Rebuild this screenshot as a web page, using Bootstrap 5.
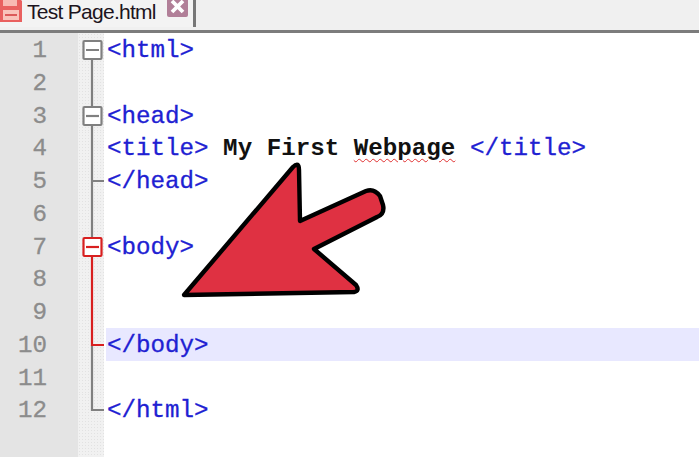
<!DOCTYPE html>
<html lang="en">
<head>
<meta charset="utf-8">
<title>Test Page.html</title>
<link href="https://cdn.jsdelivr.net/npm/bootstrap@5.3.0/dist/css/bootstrap.min.css" rel="stylesheet">
<style>
html, body { height: 100%; overflow: hidden; background: #fff; }
.editor-shell { position: relative; width: 699px; height: 457px; overflow: hidden; }
.tabstrip { height: 33px; background: #f0f0f0; border-bottom: 3px solid #7c7c7c; }
.file-tab { width: 196px; height: 27px; background: #f3f3f3; border-right: 3px solid #777; font: 21px/24px "Liberation Sans", sans-serif; color: #1c1420; letter-spacing: -.72px; }
.file-tab svg { flex: none; }
.tab-name { margin-left: 5px; }
.tab-close { margin-left: 11px; flex: none; margin-top: -4px; }
.tab-disk { margin-top: -2px; }
.editor-body { height: 424px; }
.code-row { height: 32.75px; }
.num-cell { width: 78px; flex: none; background: #e4e4e4; color: #8c8c8c; font: 24.2px/32.75px "Liberation Mono", monospace; text-align: right; padding: 2px 31px 0 0; -webkit-text-stroke: .3px #8c8c8c; }
.fold-cell { width: 26px; flex: none; height: 100%; background-color: #f1f1f1; background-image: radial-gradient(#e2e2e2 .6px, transparent .7px); background-size: 3px 3px; }
.fold-cell svg { display: block; }
.code-cell { flex: 1; margin-left: 2px; padding: 2px 0 0 1px; font: 24.2px/32.75px "Liberation Mono", monospace; color: #2020d2; white-space: pre; -webkit-text-stroke: .3px #2020d2; }
.current-line { background: #e8e8ff; }
.plain-text { color: #111; font-weight: 700; -webkit-text-stroke: 0; }
.spell-error { text-decoration: underline wavy #e03030 1px; text-underline-offset: 3px; }
.gutter-rest { height: 100%; }
.gutter-rest .num-cell { height: 100%; }
.pointer-arrow { position: absolute; left: 170px; top: 150px; }
.fold-gray { stroke: #808080; stroke-width: 2.2; fill: none; }
.fold-red { stroke: #d82020; stroke-width: 2.2; fill: none; }
.fold-box { fill: #fff; }
</style>
</head>
<body>
<div class="editor-shell">
  <div class="tabstrip d-flex">
    <div class="file-tab d-flex align-items-start">
      <svg class="tab-disk" width="22" height="24" viewBox="0 0 22 24"><path d="M0 0H19L22 3V24H0Z" fill="#e9605f"/><rect x="3" y="0" width="14" height="8" fill="#f8b9b2"/><rect x="3" y="12" width="16" height="10" fill="#f9c3bb"/><rect x="5" y="16" width="12" height="2" fill="#dc5a5a"/></svg>
      <span class="tab-name">Test Page.html</span>
      <svg class="tab-close" width="21" height="21" viewBox="0 0 21 21"><rect width="21" height="21" rx="2" fill="#b17f98"/><path d="M5 5L16 16M16 5L5 16" stroke="#fff" stroke-width="3.8"/></svg>
    </div>
  </div>
  <div class="editor-body">
    <div class="code-row d-flex"><div class="num-cell">1</div><div class="fold-cell"><svg width="26" height="33" viewBox="0 -1 26 33"><rect class="fold-gray fold-box" x="5.5" y="7" width="18" height="18" rx="1"/><path class="fold-gray" d="M8 16H21M14 26V33"/></svg></div><div class="code-cell">&lt;html&gt;</div></div>
    <div class="code-row d-flex"><div class="num-cell">2</div><div class="fold-cell"><svg width="26" height="33" viewBox="0 -1 26 33"><path class="fold-gray" d="M14 -1V33"/></svg></div><div class="code-cell"></div></div>
    <div class="code-row d-flex"><div class="num-cell">3</div><div class="fold-cell"><svg width="26" height="33" viewBox="0 -1 26 33"><path class="fold-gray" d="M14 -1V7M14 26V33"/><rect class="fold-gray fold-box" x="5.5" y="7" width="18" height="18" rx="1"/><path class="fold-gray" d="M8 16H21"/></svg></div><div class="code-cell">&lt;head&gt;</div></div>
    <div class="code-row d-flex"><div class="num-cell">4</div><div class="fold-cell"><svg width="26" height="33" viewBox="0 -1 26 33"><path class="fold-gray" d="M14 -1V33"/></svg></div><div class="code-cell">&lt;title&gt;<span class="plain-text"> My First <span class="spell-error">Webpage</span> </span>&lt;/title&gt;</div></div>
    <div class="code-row d-flex"><div class="num-cell">5</div><div class="fold-cell"><svg width="26" height="33" viewBox="0 -1 26 33"><path class="fold-gray" d="M14 -1V33M14 16H26"/></svg></div><div class="code-cell">&lt;/head&gt;</div></div>
    <div class="code-row d-flex"><div class="num-cell">6</div><div class="fold-cell"><svg width="26" height="33" viewBox="0 -1 26 33"><path class="fold-gray" d="M14 -1V33"/></svg></div><div class="code-cell"></div></div>
    <div class="code-row d-flex"><div class="num-cell">7</div><div class="fold-cell"><svg width="26" height="33" viewBox="0 -1 26 33"><path class="fold-gray" d="M14 -1V7"/><path class="fold-red" d="M14 26V33"/><rect class="fold-red fold-box" x="5.5" y="7" width="18" height="18" rx="1"/><path class="fold-red" d="M8 16H21"/></svg></div><div class="code-cell">&lt;body&gt;</div></div>
    <div class="code-row d-flex"><div class="num-cell">8</div><div class="fold-cell"><svg width="26" height="33" viewBox="0 -1 26 33"><path class="fold-red" d="M14 -1V33"/></svg></div><div class="code-cell"></div></div>
    <div class="code-row d-flex"><div class="num-cell">9</div><div class="fold-cell"><svg width="26" height="33" viewBox="0 -1 26 33"><path class="fold-red" d="M14 -1V33"/></svg></div><div class="code-cell"></div></div>
    <div class="code-row d-flex"><div class="num-cell">10</div><div class="fold-cell"><svg width="26" height="33" viewBox="0 -1 26 33"><path class="fold-gray" d="M14 16V33"/><path class="fold-red" d="M14 -1V16H26"/></svg></div><div class="code-cell current-line">&lt;/body&gt;</div></div>
    <div class="code-row d-flex"><div class="num-cell">11</div><div class="fold-cell"><svg width="26" height="33" viewBox="0 -1 26 33"><path class="fold-gray" d="M14 -1V33"/></svg></div><div class="code-cell"></div></div>
    <div class="code-row d-flex"><div class="num-cell">12</div><div class="fold-cell"><svg width="26" height="33" viewBox="0 -1 26 33"><path class="fold-gray" d="M14 -1V16H26"/></svg></div><div class="code-cell">&lt;/html&gt;</div></div>
    <div class="gutter-rest d-flex"><div class="num-cell"></div><div class="fold-cell"></div></div>
  </div>
  <svg class="pointer-arrow" width="225" height="155" viewBox="170 150 225 155"><path d="M184 295L293 167Q299 161 299 170L300 221L366 191Q374 188 380 196L383 205Q385 214 377 217L314 249L356 285Q360 291 354 292Z" fill="#df3142" stroke="#000" stroke-width="4.4" stroke-linejoin="round"/></svg>
</div>
</body>
</html>
